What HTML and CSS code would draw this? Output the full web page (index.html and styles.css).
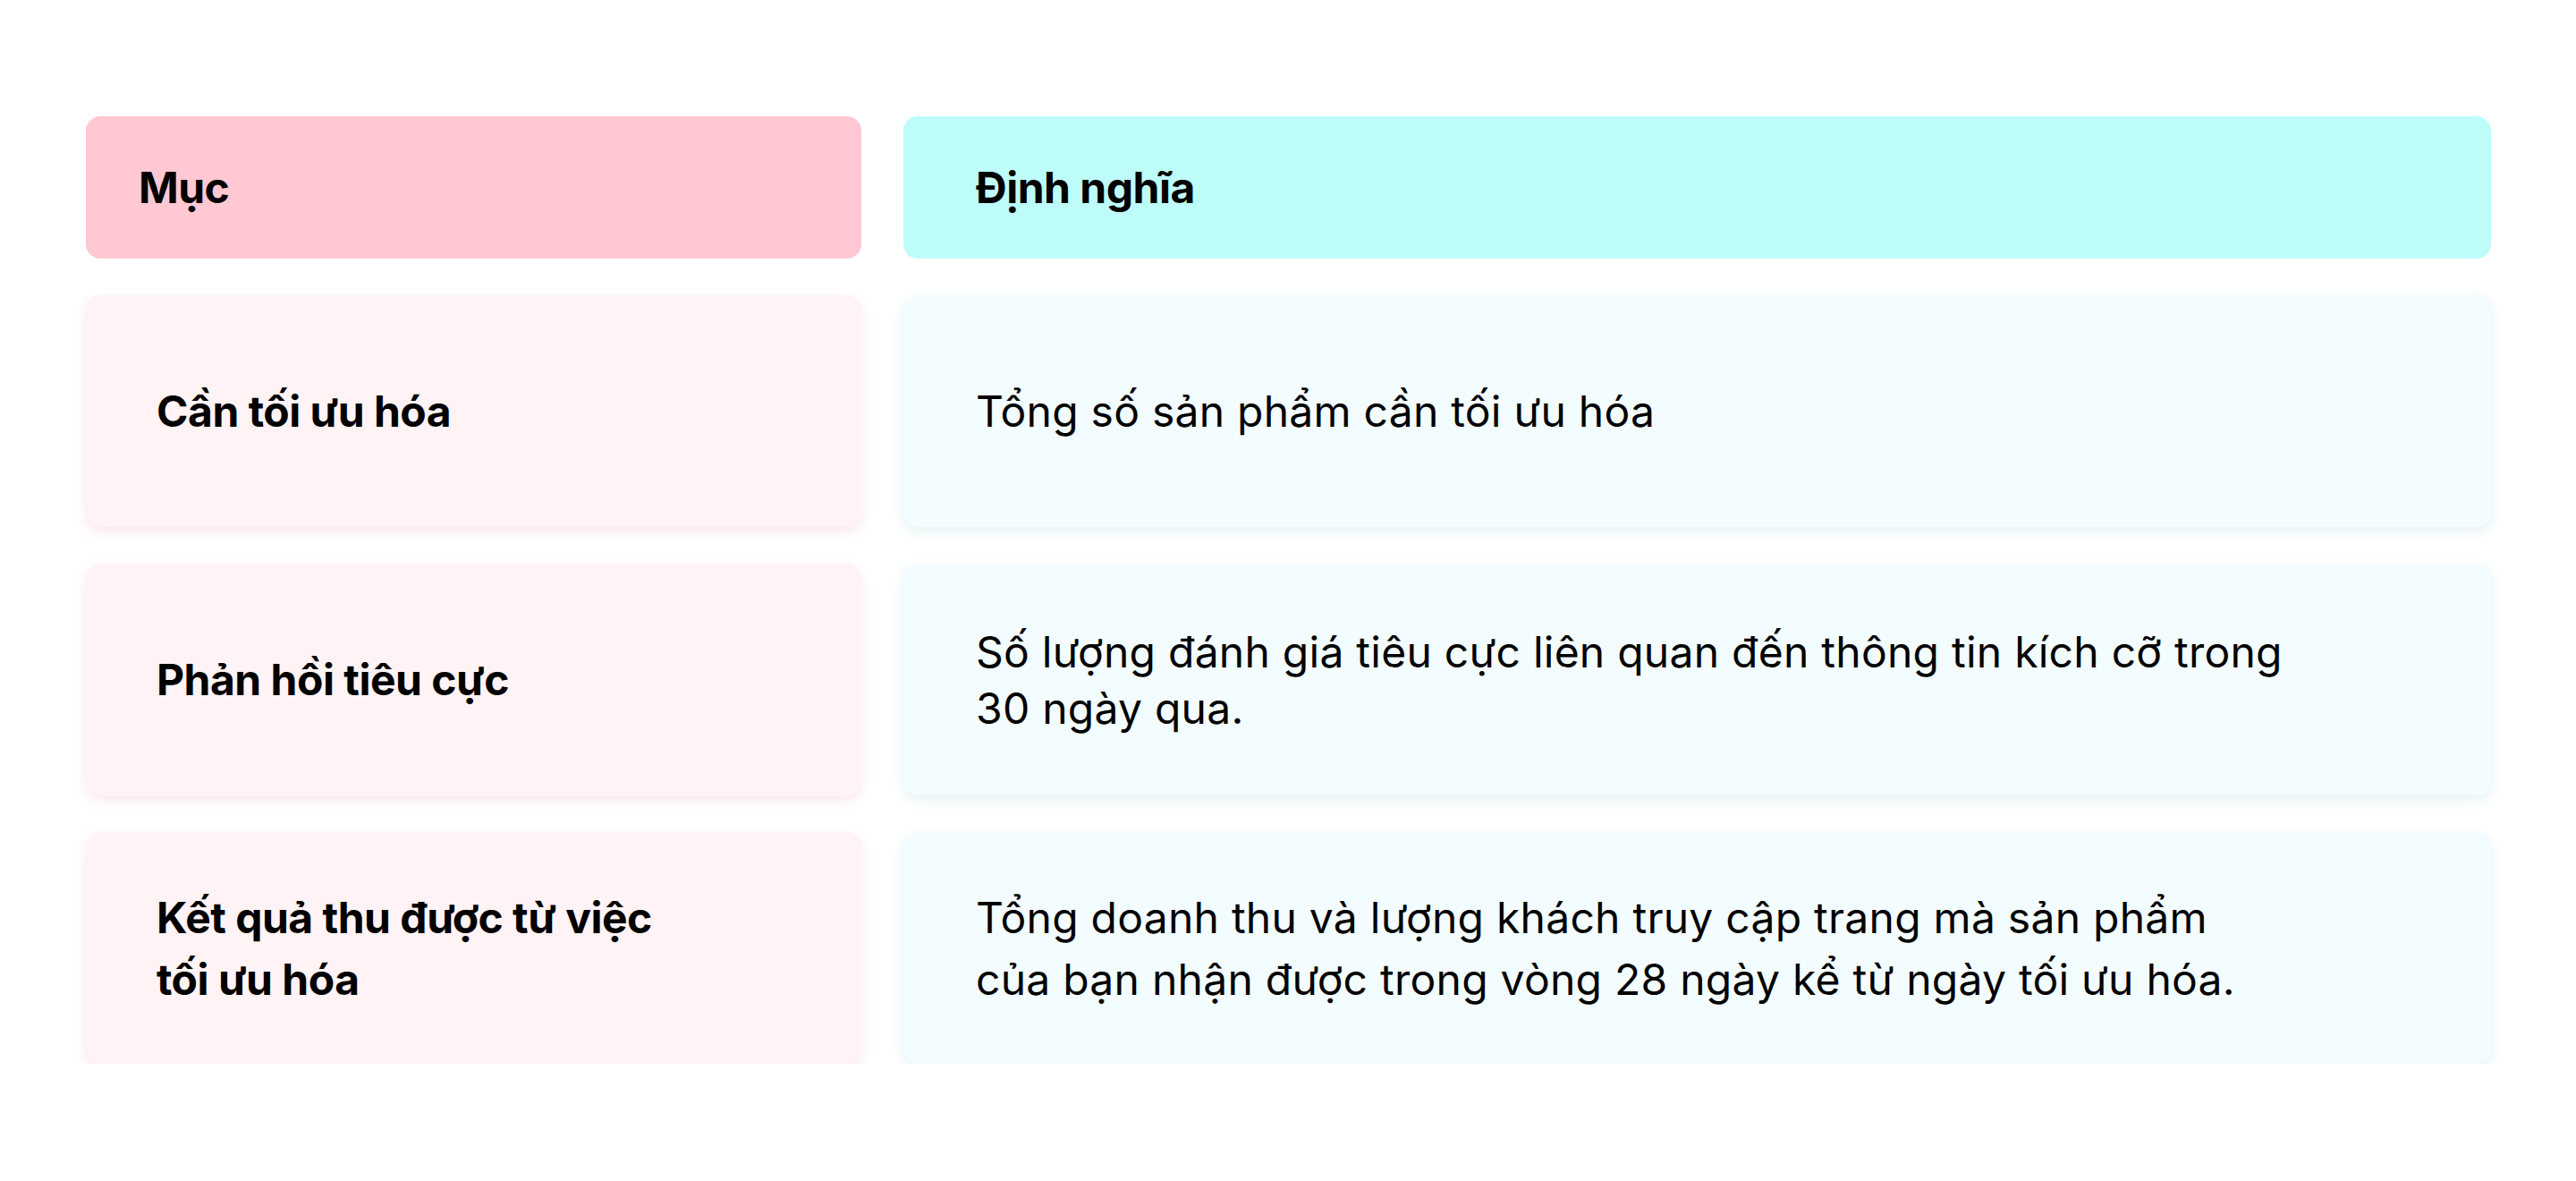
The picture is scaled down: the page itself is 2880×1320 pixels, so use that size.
FILE: index.html
```html
<!DOCTYPE html>
<html lang="vi">
<head>
<meta charset="utf-8">
<title>Định nghĩa</title>
<link rel="stylesheet" href="styles.css">
</head>
<body>
<main class="page">
  <div class="table">
    <div class="cell head head-left"><span class="head-text head-text-left">Mục</span></div>
    <div class="cell head head-right"><span class="head-text">Định nghĩa</span></div>

    <div class="cell row-left"><span class="label">Cần tối ưu hóa</span></div>
    <div class="cell row-right"><span class="desc">Tổng số sản phẩm cần tối ưu hóa</span></div>

    <div class="cell row-left"><span class="label">Phản hồi tiêu cực</span></div>
    <div class="cell row-right"><span class="desc desc-tight">Số lượng đánh giá tiêu cực liên quan đến thông tin kích cỡ trong<br>30 ngày qua.</span></div>

    <div class="cell row-left"><span class="label label-loose">Kết quả thu được từ việc tối ưu hóa</span></div>
    <div class="cell row-right"><span class="desc desc-loose">Tổng doanh thu và lượng khách truy cập trang mà sản phẩm<br>của bạn nhận được trong vòng 28 ngày kể từ ngày tối ưu hóa.</span></div>
  </div>
</main>
</body>
</html>
```

FILE: styles.css
```css
html, body {
  margin: 0;
  padding: 0;
  background: #ffffff;
}

body {
  font-family: Inter, "Noto Sans", "Liberation Sans", sans-serif;
  color: #000000;
}

.page {
  padding: 130px 0 0 96px;
}

.table {
  display: grid;
  grid-template-columns: 867px 1775px;
  grid-template-rows: 159px 259px 259px 259px;
  column-gap: 47px;
  row-gap: 41px;
}

.cell {
  display: flex;
  align-items: center;
  border-radius: 16px;
  box-sizing: border-box;
}

.head {
  font-weight: 700;
  font-size: 48px;
  letter-spacing: -0.5px;
}

.head-left {
  background: #ffc8d2;
  padding-left: 59px;
}

.head-right {
  background: #befcf9;
  padding-left: 81px;
}

.row-left {
  background: #fff3f5;
  padding-left: 79px;
  box-shadow: 0 5px 14px rgba(235, 190, 198, 0.35);
}

.row-right {
  background: #f3fcfe;
  padding-left: 81px;
  box-shadow: 0 5px 14px rgba(170, 215, 220, 0.3);
}

.label {
  font-weight: 700;
  font-size: 48px;
  letter-spacing: -0.5px;
  max-width: 600px;
  line-height: 60px;
}

.label-loose {
  line-height: 69px;
}

.desc {
  font-weight: 400;
  font-size: 48px;
  letter-spacing: 0.25px;
  line-height: 60px;
}

.desc-tight {
  line-height: 63px;
}

.desc-loose {
  line-height: 69px;
}
```
